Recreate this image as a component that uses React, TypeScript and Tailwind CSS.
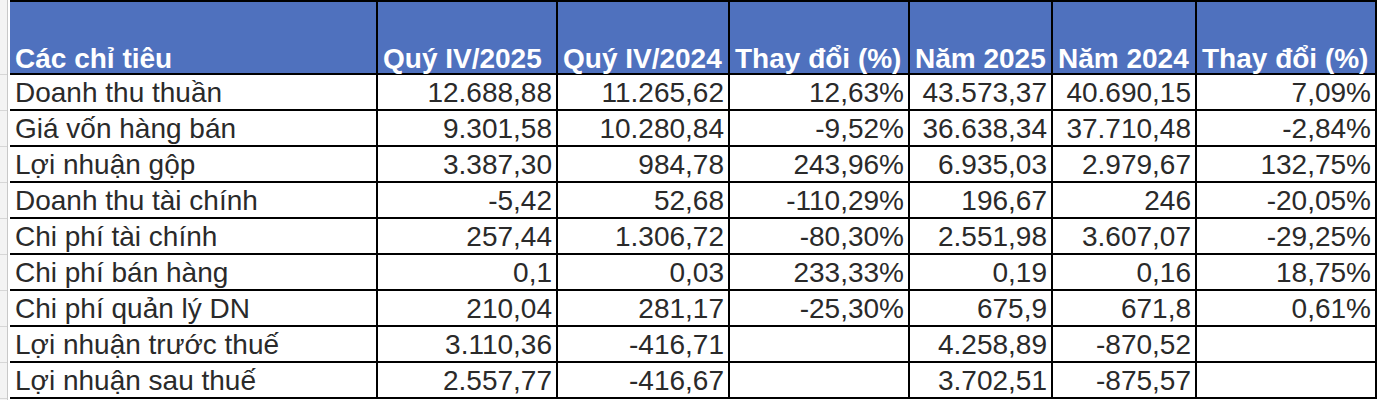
import React from "react";

const headers = [
  "Các chỉ tiêu",
  "Quý IV/2025",
  "Quý IV/2024",
  "Thay đổi (%)",
  "Năm 2025",
  "Năm 2024",
  "Thay đổi (%)",
];

const rows: string[][] = [
  ["Doanh thu thuần", "12.688,88", "11.265,62", "12,63%", "43.573,37", "40.690,15", "7,09%"],
  ["Giá vốn hàng bán", "9.301,58", "10.280,84", "-9,52%", "36.638,34", "37.710,48", "-2,84%"],
  ["Lợi nhuận gộp", "3.387,30", "984,78", "243,96%", "6.935,03", "2.979,67", "132,75%"],
  ["Doanh thu tài chính", "-5,42", "52,68", "-110,29%", "196,67", "246", "-20,05%"],
  ["Chi phí tài chính", "257,44", "1.306,72", "-80,30%", "2.551,98", "3.607,07", "-29,25%"],
  ["Chi phí bán hàng", "0,1", "0,03", "233,33%", "0,19", "0,16", "18,75%"],
  ["Chi phí quản lý DN", "210,04", "281,17", "-25,30%", "675,9", "671,8", "0,61%"],
  ["Lợi nhuận trước thuế", "3.110,36", "-416,71", "", "4.258,89", "-870,52", ""],
  ["Lợi nhuận sau thuế", "2.557,77", "-416,67", "", "3.702,51", "-875,57", ""],
];

export default function App() {
  return (
    <div
      className="flex w-[1378px] h-[400px] bg-white overflow-hidden"
      style={{ fontFamily: '"Liberation Sans", Arial, sans-serif' }}
    >
      <div className="w-[8px] bg-[#f3f3f3] border-r border-[#c8c8c8] flex flex-col shrink-0">
        <div className="h-[75px] border-b border-[#d6d6d6]" />
        {rows.map((_, i) => (
          <div key={i} className="h-[36px] border-b border-[#d6d6d6]" />
        ))}
      </div>
      <div className="ml-[2px] grid grid-cols-[368px_180px_172px_180px_143px_144px_180px] content-start">
        {headers.map((h, i) => (
          <div
            key={i}
            className="h-[75px] bg-[#4f71be] border-t-2 border-b-2 border-r-2 border-black flex items-end pl-[5px] pb-0 text-white font-bold text-[28px] leading-[28px] whitespace-nowrap"
          >
            {h}
          </div>
        ))}
        {rows.map((r, ri) =>
          r.map((c, ci) => (
            <div
              key={ri + "-" + ci}
              className={
                "h-[36px] border-b-2 border-r-2 border-black flex items-end pb-[2px] text-[28px] leading-[28px] text-[#2a2a2a] whitespace-nowrap " +
                (ci === 0 ? "justify-start pl-[5px]" : "justify-end pr-[4px]")
              }
            >
              {c}
            </div>
          ))
        )}
      </div>
    </div>
  );
}
